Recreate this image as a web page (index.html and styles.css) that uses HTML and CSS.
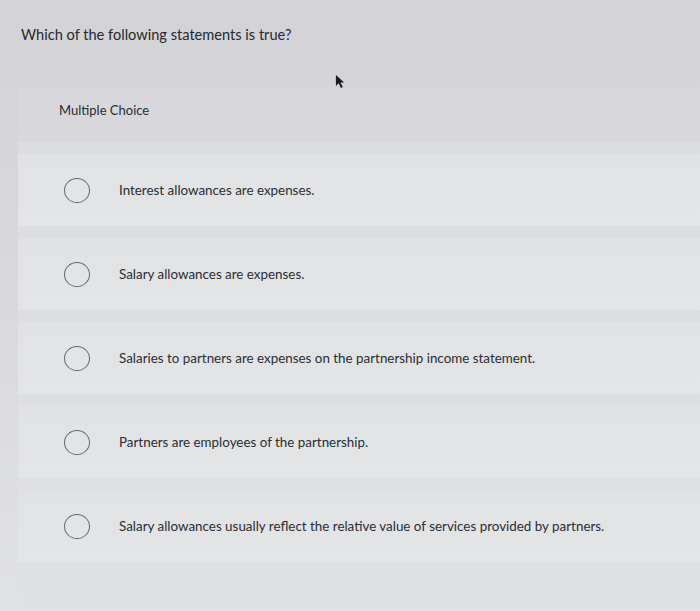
FILE: index.html
```html
<!DOCTYPE html>
<html lang="en">
<head>
<meta charset="utf-8">
<title>Multiple Choice</title>
<link rel="stylesheet" href="styles.css">
</head>
<body>
<main class="page">
  <h1 class="question">Which of the following statements is true?</h1>
  <section class="panel">
    <div class="panel-head">Multiple Choice</div>
    <ul class="options">
      <li class="option"><span class="radio"></span><span class="label">Interest allowances are expenses.</span></li>
      <li class="option"><span class="radio"></span><span class="label">Salary allowances are expenses.</span></li>
      <li class="option"><span class="radio"></span><span class="label">Salaries to partners are expenses on the partnership income statement.</span></li>
      <li class="option"><span class="radio"></span><span class="label">Partners are employees of the partnership.</span></li>
      <li class="option"><span class="radio"></span><span class="label">Salary allowances usually reflect the relative value of services provided by partners.</span></li>
    </ul>
  </section>
  <svg class="cursor" width="11" height="15" viewBox="0 0 12 16" aria-hidden="true">
    <path d="M1 1 L1 13 L4 10 L6.5 15 L8.5 14 L6 9 L10 9 Z" fill="#1c1c22"/>
  </svg>
</main>
</body>
</html>
```

FILE: styles.css
```css
html, body {
  margin: 0;
  padding: 0;
}
body {
  background: #d5d4d8;
  font-family: Lato, "Open Sans", "Liberation Sans", sans-serif;
  color: #26272d;
}
.page {
  position: relative;
  width: 700px;
  height: 611px;
  overflow: hidden;
  background: linear-gradient(180deg, #d3d2d6 0%, #d8d8db 40%, #e1e2e3 100%);
}
.question {
  margin: 0;
  padding: 26px 0 0 21px;
  height: 88px;
  box-sizing: border-box;
  font-size: 14.6px;
  font-weight: 400;
  line-height: 18px;
  color: #28282e;
}
.panel {
  margin-left: 18px;
  background: #dcdcdf;
  height: 523px;
  display: flex;
  flex-direction: column;
}
.panel-head {
  height: 54px;
  box-sizing: border-box;
  padding: 14px 0 0 41px;
  font-size: 13px;
  line-height: 16px;
  color: #2a2b31;
  background: #d8d8dc;
}
.options {
  list-style: none;
  margin: 0;
  padding: 12px 0 0 0;
  display: flex;
  flex-direction: column;
  gap: 12px;
  flex: 1;
  background: linear-gradient(180deg, #dcdde0 0%, #e0e1e3 100%);
}
.option {
  height: 72px;
  display: flex;
  align-items: center;
  padding-left: 46px;
  background: linear-gradient(180deg, #e1e2e4 0%, #e4e5e7 100%);
}
.radio {
  width: 24px;
  height: 23px;
  border: 1.6px solid #5f6673;
  border-radius: 50%;
  flex: none;
}
.label {
  margin-left: 29px;
  font-size: 13.4px;
  line-height: 16px;
  color: #2b2c33;
}
.cursor {
  position: absolute;
  left: 335px;
  top: 74px;
}
```
